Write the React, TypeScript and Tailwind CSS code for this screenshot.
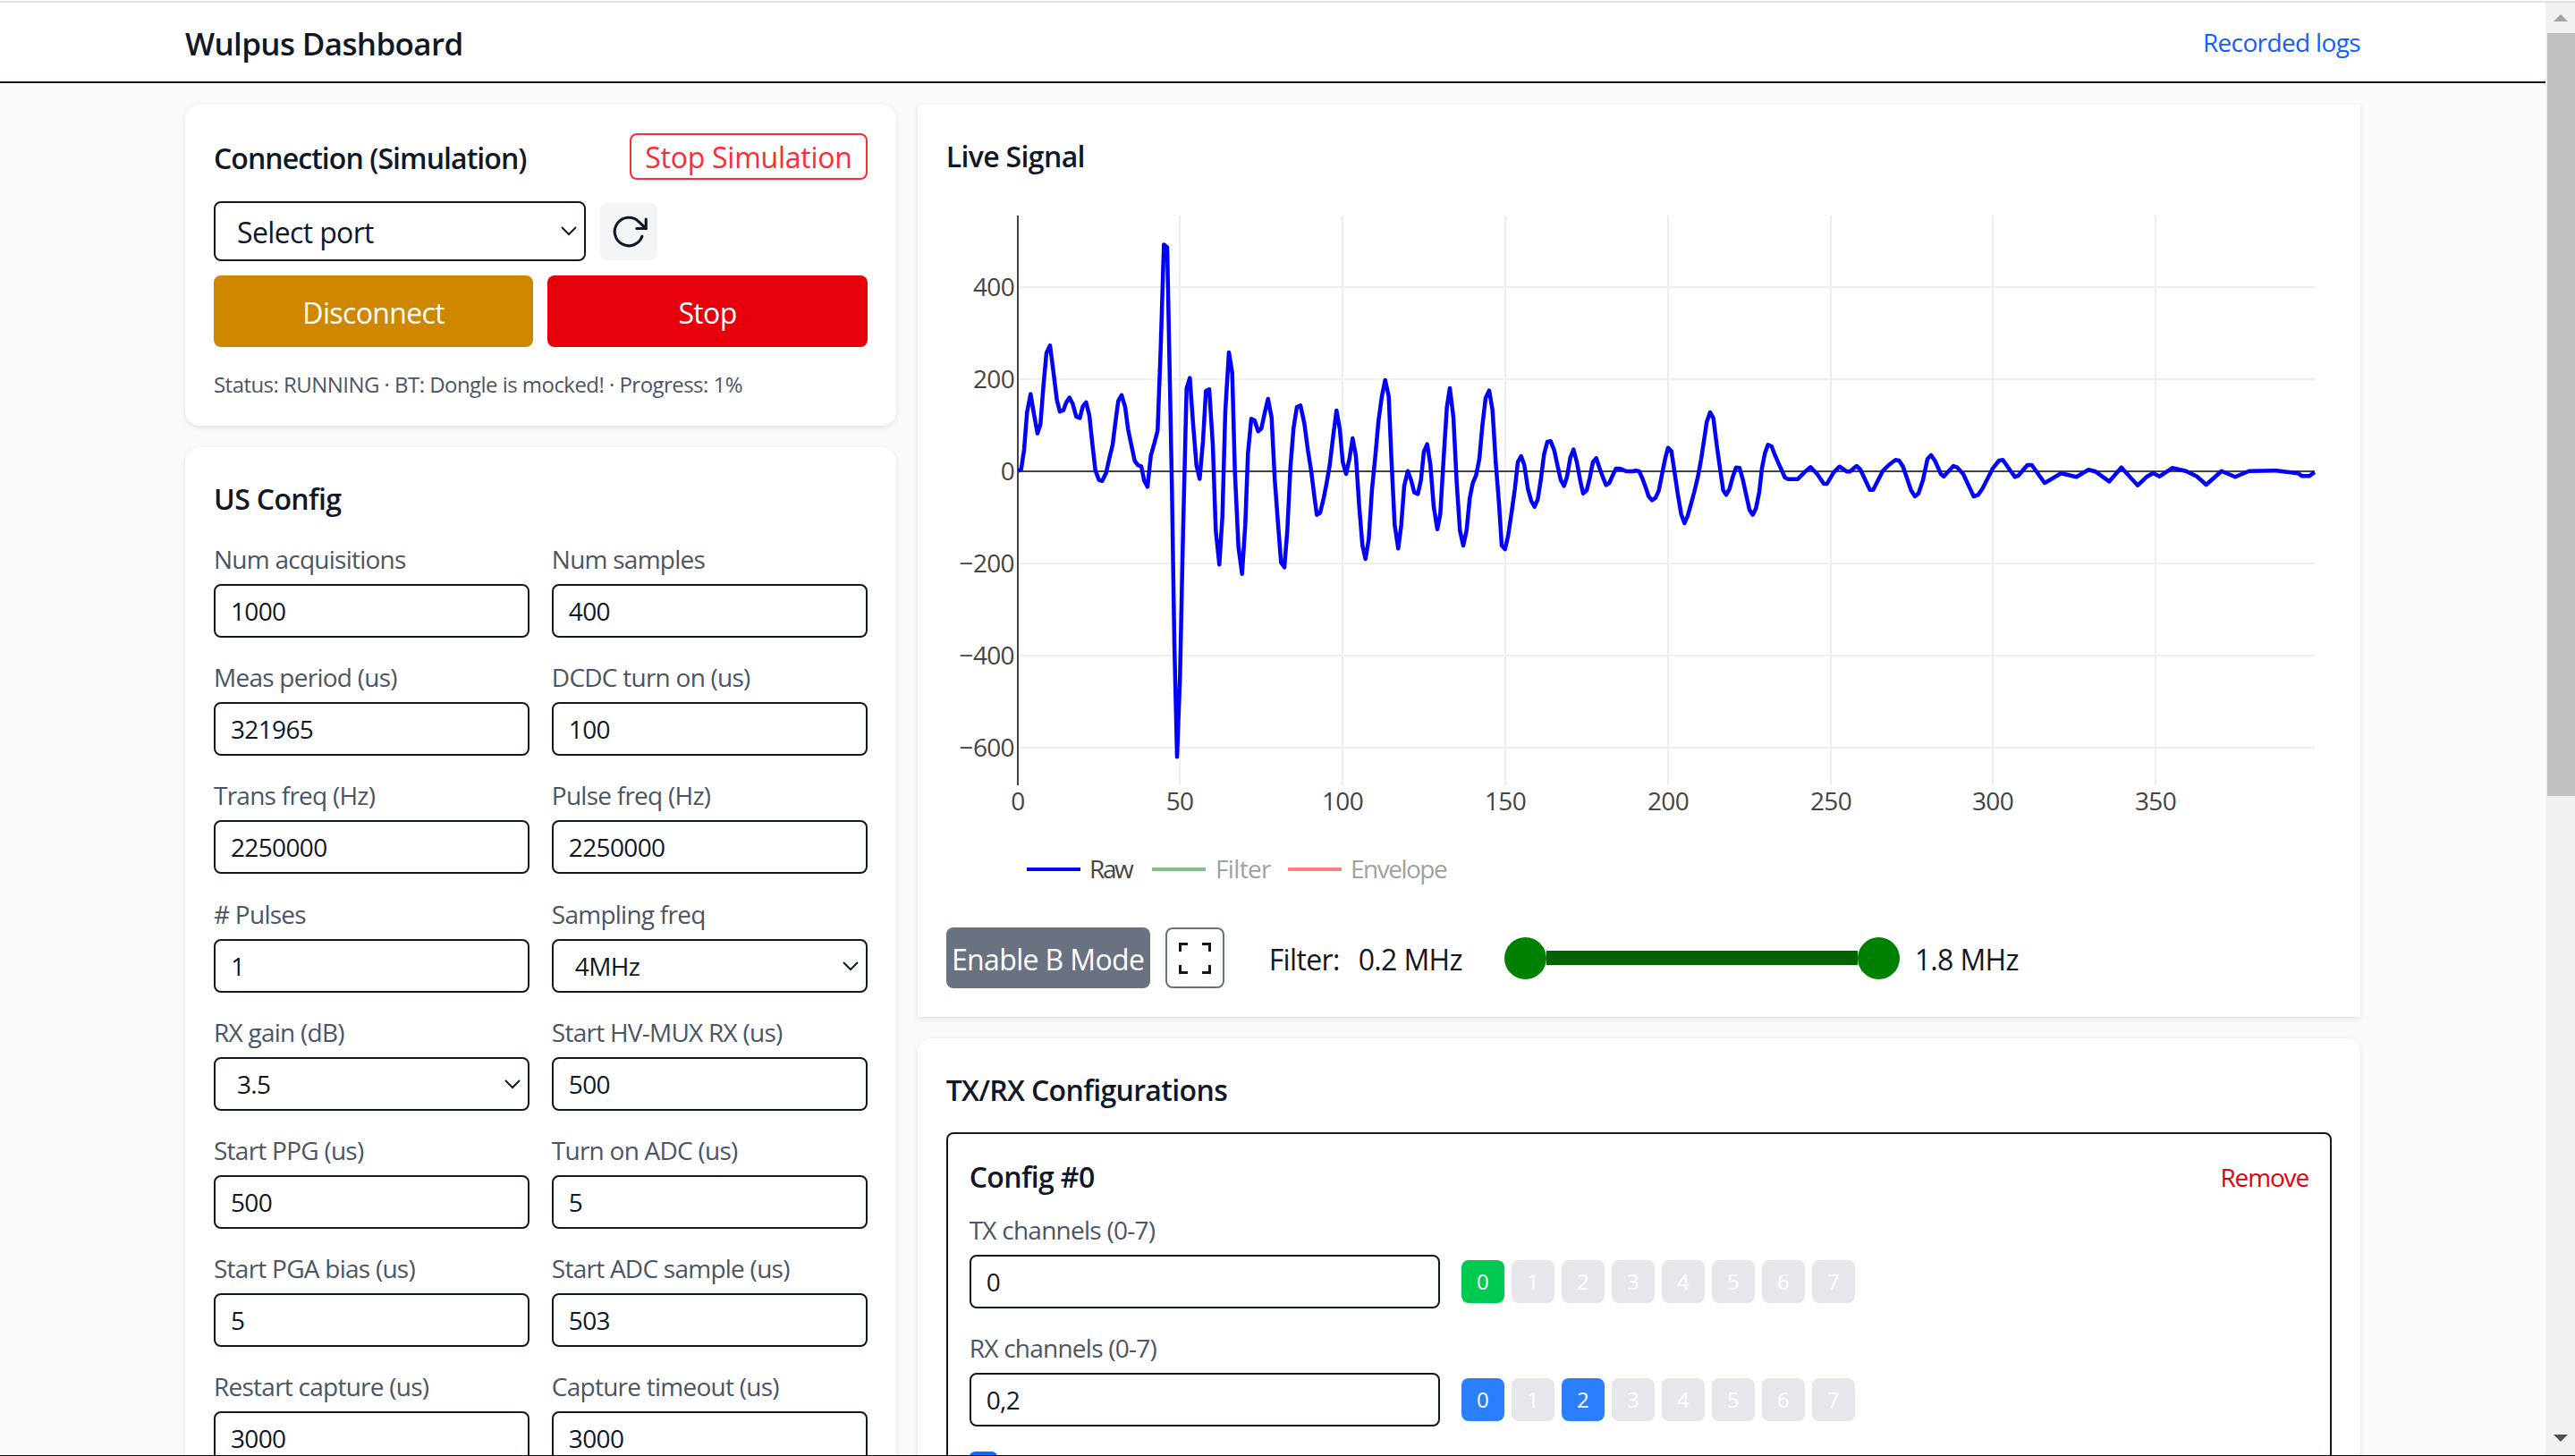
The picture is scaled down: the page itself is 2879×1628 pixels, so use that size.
import React from 'react';
import { FiRotateCw } from 'react-icons/fi';

type Pt = [number, number];

// traced from the capture, each block in its own crop scale
const toPage = (ox: number, oy: number, sx: number, sy: number, pts: Pt[]) =>
  pts.map(([x, y]) => `${(ox + x / sx).toFixed(1)},${(oy + y / sy).toFixed(1)}`);

const signal = [
  ...toPage(1130, 260, 3, 2.613, [
    [25, 697], [35, 692], [45, 635], [55, 525], [67, 472], [78, 530], [90, 587], [100, 560], [110, 445], [120, 352],
    [132, 330], [143, 405], [155, 490], [165, 523], [177, 519], [186, 497], [197, 482], [208, 500], [220, 538], [232, 542],
    [242, 508], [253, 496], [264, 535], [273, 610], [284, 695], [296, 723], [307, 726], [320, 702], [331, 660], [342, 620],
    [352, 550], [361, 492], [372, 475], [384, 510], [394, 575], [405, 622], [416, 667], [427, 680], [438, 683], [448, 725],
    [459, 743], [470, 652], [482, 615], [493, 578], [503, 340], [514, 35], [525, 43], [533, 400], [541, 750], [549, 1200],
    [558, 1532], [568, 1300], [578, 880], [586, 600], [590, 455], [601, 425], [612, 560], [623, 680], [634, 720], [645, 610],
    [655, 463], [666, 458], [678, 620], [688, 870], [700, 970], [710, 830], [720, 520], [732, 350], [743, 410], [752, 700],
    [764, 920],
  ]),
  ...toPage(1380, 380, 3, 3, [
    [26, 785], [37, 620], [46, 380], [57, 265], [68, 270], [80, 307], [91, 297], [102, 245], [113, 198], [125, 260],
    [136, 470], [147, 620], [157, 747], [168, 763], [178, 640], [188, 430], [199, 295], [210, 225], [222, 220], [235, 280],
    [247, 370], [258, 440], [268, 520], [277, 587], [288, 580], [300, 530], [310, 480], [320, 420], [332, 320], [343, 237],
    [354, 300], [364, 410], [375, 450], [386, 400], [397, 330], [408, 390], [419, 560], [430, 690], [440, 735], [451, 670],
    [462, 500], [473, 390], [484, 270], [495, 190], [506, 135], [518, 190], [527, 400], [538, 620], [550, 700], [560, 620],
    [570, 490], [582, 440], [593, 470], [604, 512], [616, 517], [626, 470], [636, 375], [647, 350], [658, 420], [669, 560],
    [681, 635], [691, 585], [702, 400], [713, 225], [723, 162], [735, 260], [746, 480], [757, 640], [768, 690], [779, 640],
    [790, 530], [800, 480], [811, 455], [822, 400], [832, 290], [843, 195], [855, 170], [866, 235], [877, 410], [888, 550],
    [897, 690],
  ]),
  ...toPage(1670, 420, 3, 3, [
    [38, 582], [48, 540], [60, 460], [71, 380], [81, 290], [92, 270], [103, 300], [115, 380], [126, 420], [137, 440],
    [148, 415], [158, 350], [169, 265], [180, 222], [191, 220], [203, 250], [214, 300], [225, 350], [236, 370], [246, 340],
    [257, 275], [268, 248], [279, 290], [290, 350], [300, 395], [312, 385], [322, 345], [333, 290], [344, 277], [355, 310],
    [366, 340], [377, 367], [388, 360], [399, 335], [410, 312], [421, 312], [432, 315], [443, 320], [455, 321], [466, 321],
    [477, 319], [488, 321], [499, 345], [510, 375], [520, 405], [531, 418], [543, 410], [554, 385], [565, 330], [576, 275],
    [585, 242], [596, 253], [607, 325], [618, 400], [629, 465], [640, 495], [651, 470], [662, 430], [673, 390], [685, 340],
    [696, 280], [706, 215], [715, 155], [726, 123], [737, 143], [748, 230], [759, 310], [770, 385], [780, 400], [791, 380],
    [802, 340], [813, 308], [825, 310], [836, 350], [847, 400], [858, 450], [869, 467], [880, 445], [891, 390], [900, 310],
  ]),
  ...toPage(1960, 470, 3, 3, [
    [40, 110], [50, 82], [62, 87], [73, 115], [85, 143], [95, 165], [107, 192], [118, 197], [150, 197], [172, 175],
    [193, 157], [215, 180], [237, 212], [248, 213], [270, 175], [290, 155], [315, 172], [325, 172], [347, 153], [360, 165],
    [392, 233], [403, 233], [435, 170], [455, 150], [478, 133], [490, 135], [503, 155], [530, 235], [543, 255], [555, 245],
    [570, 200], [585, 130], [597, 117], [610, 135], [630, 180], [640, 188], [672, 153], [685, 158], [705, 180], [740, 255],
    [755, 250], [770, 228], [805, 160], [825, 135], [838, 133], [878, 190], [890, 185], [920, 150], [935, 150],
  ]),
  ...toPage(1700, 120, 1.633, 3, [
    [957, 1260], [987, 1228], [1015, 1240], [1037, 1216], [1050, 1222], [1075, 1255], [1097, 1208], [1127, 1268], [1143, 1240],
    [1155, 1227], [1167, 1238], [1190, 1210], [1215, 1220], [1235, 1238], [1252, 1266], [1280, 1220], [1305, 1240], [1330, 1220],
    [1380, 1219], [1420, 1228], [1427, 1237], [1440, 1237], [1450, 1224],
  ]),
].join(' ');

const yTicks = [
  { label: '400', y: 321 },
  { label: '200', y: 424 },
  { label: '−200', y: 630 },
  { label: '−400', y: 733 },
  { label: '−600', y: 836 },
];
const xTicks = [
  { label: '50', x: 1319 },
  { label: '100', x: 1501 },
  { label: '150', x: 1683 },
  { label: '200', x: 1865 },
  { label: '250', x: 2047 },
  { label: '300', x: 2228 },
  { label: '350', x: 2410 },
];

const Chevron = () => (
  <svg className="absolute right-[10px] top-[25px] w-[18px] h-[11px] pointer-events-none" viewBox="0 0 18 11" fill="none">
    <path d="M1 1l8 8 8-8" stroke="#101828" strokeWidth="2" />
  </svg>
);

const Field = ({ label, value }: { label: string; value: string }) => (
  <div>
    <label className="block h-[40px] mb-[6px] text-[28px] leading-[36px] tracking-[-0.75px] text-[#4a5565]">{label}</label>
    <input
      defaultValue={value}
      className="block w-full h-[60px] px-[17px] border-2 border-[#101828] rounded-lg bg-white text-[28px] text-[#101828]"
    />
  </div>
);

const SelectField = ({ label, value }: { label: string; value: string }) => (
  <div>
    <label className="block h-[40px] mb-[6px] text-[28px] leading-[36px] tracking-[-0.75px] text-[#4a5565]">{label}</label>
    <div className="relative">
      <select
        defaultValue={value}
        className="block w-full h-[60px] pl-[24px] pr-[30px] appearance-none border-2 border-[#101828] rounded-lg bg-white text-[28px] text-[#101828]"
      >
        <option>{value}</option>
      </select>
      <Chevron />
    </div>
  </div>
);

const ChannelRow = ({ label, value, active, activeClass }: { label: string; value: string; active: number[]; activeClass: string }) => (
  <div>
    <label className="block h-[40px] mb-[6px] text-[28px] leading-[36px] tracking-[-0.75px] text-[#4a5565]">{label}</label>
    <div className="flex items-center gap-[24px]">
      <input
        defaultValue={value}
        className="block w-[526px] h-[60px] px-[17px] border-2 border-[#101828] rounded-lg bg-white text-[28px] text-[#101828]"
      />
      <div className="flex gap-[8px]">
        {[0, 1, 2, 3, 4, 5, 6, 7].map((ch) => (
          <button
            key={ch}
            className={`w-[48px] h-[48px] rounded-lg text-[24px] text-white ${active.includes(ch) ? activeClass : 'bg-[#e5e7eb]'}`}
          >
            {ch}
          </button>
        ))}
      </div>
    </div>
  </div>
);

const SignalChart = () => (
  <svg className="block w-[1549px] h-[800px]" viewBox="1058 221 1549 800" fontFamily="'Open Sans', sans-serif" fontSize="28">
    {xTicks.map((t) => (
      <line key={t.label} x1={t.x} x2={t.x} y1={241} y2={878} stroke="#eeeeee" strokeWidth="2" />
    ))}
    {yTicks.map((t) => (
      <line key={t.label} x1={1138} x2={2588} y1={t.y} y2={t.y} stroke="#eeeeee" strokeWidth="2" />
    ))}
    <line x1={1138} x2={2588} y1={527} y2={527} stroke="#444444" strokeWidth="2" />
    <line x1={1138} x2={1138} y1={241} y2={878} stroke="#444444" strokeWidth="2" />
    <polyline points={signal} fill="none" stroke="#0000ff" strokeWidth="4.5" strokeLinejoin="round" />
    {yTicks.map((t) => (
      <text key={t.label} x={1134} y={t.y + 10} textAnchor="end" fill="#444444">{t.label}</text>
    ))}
    <text x={1134} y={537} textAnchor="end" fill="#444444">0</text>
    <text x={1138} y={906} textAnchor="middle" fill="#444444">0</text>
    {xTicks.map((t) => (
      <text key={t.label} x={t.x} y={906} textAnchor="middle" fill="#444444">{t.label}</text>
    ))}
    <line x1={1148} x2={1208} y1={972} y2={972} stroke="#0000ff" strokeWidth="4" />
    <text x={1218} y={982} fill="#444444" className="tracking-[-2.4px]">Raw</text>
    <line x1={1288} x2={1348} y1={972} y2={972} stroke="#80c080" strokeWidth="4" />
    <text x={1359} y={982} fill="#a1a1a1">Filter</text>
    <line x1={1440} x2={1500} y1={972} y2={972} stroke="#ff8080" strokeWidth="4" />
    <text x={1510} y={982} fill="#a1a1a1" className="tracking-[-1.5px]">Envelope</text>
  </svg>
);

const Scrollbar = () => (
  <div className="w-[33px] shrink-0 bg-[#f1f1f1] flex flex-col items-end">
    <div className="w-full h-[34px] flex items-center justify-center pl-[1px]">
      <svg className="w-[16px] h-[8px]" viewBox="0 0 16 8"><path d="M8 0l8 8H0z" fill="#a3a3a3" /></svg>
    </div>
    <div className="w-[31px] h-[853px] bg-[#c1c1c1]" />
    <div className="flex-1" />
    <div className="w-full h-[33px] flex items-start justify-center pt-[10px] pl-[1px]">
      <svg className="w-[16px] h-[8px]" viewBox="0 0 16 8"><path d="M0 0h16l-8 8z" fill="#505050" /></svg>
    </div>
  </div>
);

export default function App() {
  return (
    <div className="w-[2879px] h-[1628px] overflow-hidden flex flex-col bg-[#f9fafb] tracking-[-0.64px] font-['Open_Sans',sans-serif] text-[#101828]">
      <div className="h-[3px] shrink-0 bg-[#e2e2e2] border-t border-white" />
      <div className="flex flex-1 min-h-0">
        <div className="flex-1 min-w-0 overflow-hidden">
          {/* Header */}
          <header className="h-[90px] bg-white border-b-2 border-[#101828]">
            <div className="w-[2432px] mx-auto h-full flex items-center justify-between">
              <h1 className="pt-[4px] text-[35px] font-semibold">Wulpus Dashboard</h1>
              <a className="text-[28px] text-[#155dfc]">Recorded logs</a>
            </div>
          </header>

          <main className="w-[2432px] mx-auto mt-[24px] grid grid-cols-3 gap-[24px] items-start">
            {/* Left column */}
            <div className="flex flex-col gap-[24px]">
              <section className="bg-white rounded-2xl shadow-[0_2px_6px_rgba(0,0,0,0.1)] px-[32px] pt-[32px] pb-[30px]">
                <div className="flex items-center justify-between h-[52px]">
                  <h2 className="pt-[3px] text-[32px] font-semibold tracking-[-0.94px]">Connection (Simulation)</h2>
                  <button className="h-[52px] px-[15px] pt-[2px] border-2 border-[#fb2c36] rounded-lg text-[32px] leading-none font-medium tracking-[-0.25px] text-[#fb2c36]">Stop Simulation</button>
                </div>
                <div className="flex items-center gap-[16px] mt-[24px]">
                  <div className="relative w-[416px]">
                    <select defaultValue="Select port" className="block w-full h-[67px] pl-[24px] pt-[3px] appearance-none border-2 border-[#101828] rounded-lg bg-white text-[32px]">
                      <option>Select port</option>
                    </select>
                    <svg className="absolute right-[10px] top-[28px] w-[18px] h-[11px] pointer-events-none" viewBox="0 0 18 11" fill="none">
                      <path d="M1 1l8 8 8-8" stroke="#101828" strokeWidth="2" />
                    </svg>
                  </div>
                  <button className="w-[64px] h-[64px] rounded-lg bg-[#f3f4f6] flex items-center justify-center">
                    <FiRotateCw size={42} color="#101828" strokeWidth={1.8} />
                  </button>
                </div>
                <div className="grid grid-cols-2 gap-[16px] mt-[16px]">
                  <button className="h-[80px] pt-[3px] rounded-lg bg-[#d08700] text-[32px] text-white">Disconnect</button>
                  <button className="h-[80px] pt-[3px] rounded-lg bg-[#e7000b] text-[32px] text-white">Stop</button>
                </div>
                <p className="mt-[26px] text-[24px] leading-[32px] tracking-[-0.54px] text-[#4a5565]">Status: RUNNING · BT: Dongle is mocked! · Progress: 1%</p>
              </section>

              <section className="bg-white rounded-2xl shadow-[0_2px_6px_rgba(0,0,0,0.1)] p-[32px]">
                <h2 className="h-[52px] text-[32px] leading-[52px] font-semibold">US Config</h2>
                <div className="grid grid-cols-2 gap-x-[25px] gap-y-[26.15px] mt-[23.2px]">
                  <Field label="Num acquisitions" value="1000" />
                  <Field label="Num samples" value="400" />
                  <Field label="Meas period (us)" value="321965" />
                  <Field label="DCDC turn on (us)" value="100" />
                  <Field label="Trans freq (Hz)" value="2250000" />
                  <Field label="Pulse freq (Hz)" value="2250000" />
                  <Field label="# Pulses" value="1" />
                  <SelectField label="Sampling freq" value="4MHz" />
                  <SelectField label="RX gain (dB)" value="3.5" />
                  <Field label="Start HV-MUX RX (us)" value="500" />
                  <Field label="Start PPG (us)" value="500" />
                  <Field label="Turn on ADC (us)" value="5" />
                  <Field label="Start PGA bias (us)" value="5" />
                  <Field label="Start ADC sample (us)" value="503" />
                  <Field label="Restart capture (us)" value="3000" />
                  <Field label="Capture timeout (us)" value="3000" />
                </div>
              </section>
            </div>

            {/* Right column */}
            <div className="col-span-2 flex flex-col gap-[24px]">
              <section className="bg-white shadow-[0_2px_6px_rgba(0,0,0,0.1)] p-[32px]">
                <h2 className="h-[52px] mb-[20px] text-[32px] leading-[52px] font-semibold">Live Signal</h2>
                <SignalChart />
                <div className="flex items-center h-[68px] mt-[16px] text-[32px]">
                  <button className="w-[228px] h-[68px] pt-[3px] rounded-lg bg-[#6a7282] text-white whitespace-nowrap">Enable B Mode</button>
                  <button className="w-[66px] h-[68px] ml-[17px] rounded-lg border-2 border-[#6a7282] bg-white flex items-center justify-center">
                    <svg className="w-[36px] h-[35px]" viewBox="0 0 36 35" fill="none" stroke="#101828" strokeWidth="3">
                      <path d="M1.5 10V1.5H10M26 1.5H34.5V10M34.5 25V33.5H26M10 33.5H1.5V25" />
                    </svg>
                  </button>
                  <span className="ml-[50px] w-[100px] pt-[4px]">Filter:</span>
                  <span className="w-[163px] pt-[4px]">0.2 MHz</span>
                  <div className="w-[442px] flex items-center">
                    <span className="w-[47px] h-[47px] rounded-full bg-[#008000] shrink-0" />
                    <span className="flex-1 h-[16px] bg-[#006400]" />
                    <span className="w-[47px] h-[47px] rounded-full bg-[#008000] shrink-0" />
                  </div>
                  <span className="ml-[17px] pt-[4px]">1.8 MHz</span>
                </div>
              </section>

              <section className="bg-white rounded-2xl shadow-[0_2px_6px_rgba(0,0,0,0.1)] p-[32px]">
                <h2 className="h-[52px] mb-[21px] text-[32px] leading-[52px] font-semibold">TX/RX Configurations</h2>
                <div className="border-2 border-[#101828] rounded-lg px-[24px] pt-[24px] pb-[24px]">
                  <div className="flex items-center justify-between h-[48px] mb-[17px]">
                    <h3 className="text-[32px] font-semibold">Config #0</h3>
                    <button className="text-[28px] tracking-[-1.16px] text-[#e7000b]">Remove</button>
                  </div>
                  <div className="flex flex-col gap-[26px]">
                    <ChannelRow label="TX channels (0-7)" value="0" active={[0]} activeClass="bg-[#00c950]" />
                    <ChannelRow label="RX channels (0-7)" value="0,2" active={[0, 2]} activeClass="bg-[#2b7fff]" />
                  </div>
                  <div className="w-[31px] h-[31px] mt-[28px] rounded-md bg-[#0a6cff]" />
                </div>
              </section>
            </div>
          </main>
        </div>
        <Scrollbar />
      </div>
      <div className="h-[1px] shrink-0 bg-[#101010]" />
    </div>
  );
}
